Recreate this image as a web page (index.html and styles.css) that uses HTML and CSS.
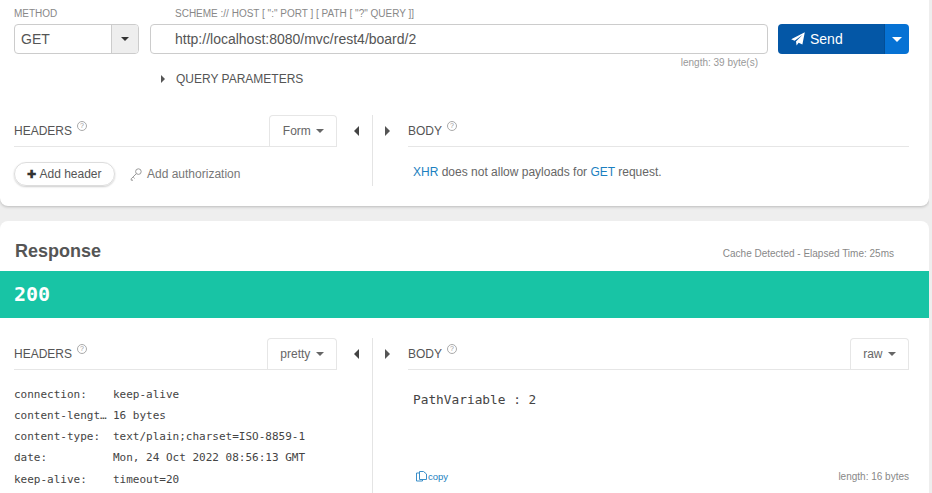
FILE: index.html
```html
<!DOCTYPE html>
<html lang="en">
<head>
<meta charset="utf-8">
<title>REST client</title>
<link rel="stylesheet" href="styles.css">
</head>
<body>
<main class="page">
  <section class="card request">
    <div class="request-row">
      <div class="method-col">
        <div class="field-label">METHOD</div>
        <div class="method-box">
          <span class="method-value">GET</span>
          <span class="method-caret"><i class="caret-down dark"></i></span>
        </div>
      </div>
      <div class="url-col">
        <div class="field-label url-label">SCHEME :// HOST [ ":" PORT ] [ PATH [ "?" QUERY ]]</div>
        <div class="url-box">http://localhost:8080/mvc/rest4/board/2</div>
        <div class="url-length">length: 39 byte(s)</div>
      </div>
      <div class="send-col">
        <div class="send-btn">
          <span class="send-main">
            <svg class="send-icon" viewBox="0 0 14 14" width="14" height="14"><path d="M13.8.2 11.4 12.6 7.6 10.8 5.6 13.6 5 9.6 11.6 2.8 3.6 8.8.2 7.2Z" fill="#fff"/></svg>
            Send
          </span>
          <span class="send-drop"><i class="caret-down white"></i></span>
        </div>
      </div>
    </div>
    <div class="query-row"><i class="caret-right small"></i><span>QUERY PARAMETERS</span></div>
    <div class="split split-request">
      <div class="pane-left">
        <div class="pane-head">
          <span class="pane-title">HEADERS</span><span class="help">?</span>
          <span class="tab tab-form">Form <i class="caret-down grey"></i></span>
        </div>
        <div class="header-actions">
          <span class="pill"><b class="plus">✚</b>Add header</span>
          <span class="auth">
            <svg class="key" viewBox="0 0 12 13" width="12" height="13"><g fill="none" stroke="#999" stroke-width="1"><circle cx="8.4" cy="3.6" r="2.8"/><path d="M6.4 5.6 1.2 10.8 1.2 12.2 3 12.2M3.2 9 4.6 10.4"/></g></svg>
            Add authorization
          </span>
        </div>
      </div>
      <div class="arrows"><i class="caret-left"></i></div>
      <div class="pane-right">
        <span class="arrow-right"><i class="caret-right"></i></span>
        <div class="pane-main">
          <div class="pane-head">
            <span class="pane-title">BODY</span><span class="help">?</span>
          </div>
          <p class="xhr"><span class="link">XHR</span> does not allow payloads for <span class="link">GET</span> request.</p>
        </div>
      </div>
    </div>
  </section>

  <section class="card response">
    <div class="response-head">
      <h2>Response</h2>
      <span class="elapsed">Cache Detected - Elapsed Time: 25ms</span>
    </div>
    <div class="status">200</div>
    <div class="split split-response">
      <div class="pane-left">
        <div class="pane-head">
          <span class="pane-title">HEADERS</span><span class="help">?</span>
          <span class="tab tab-pretty">pretty <i class="caret-down grey"></i></span>
        </div>
        <dl class="resp-headers">
          <div class="kv"><dt>connection:</dt><dd>keep-alive</dd></div>
          <div class="kv"><dt>content-length:</dt><dd>16 bytes</dd></div>
          <div class="kv"><dt>content-type:</dt><dd>text/plain;charset=ISO-8859-1</dd></div>
          <div class="kv"><dt>date:</dt><dd>Mon, 24 Oct 2022 08:56:13 GMT</dd></div>
          <div class="kv"><dt>keep-alive:</dt><dd>timeout=20</dd></div>
        </dl>
      </div>
      <div class="arrows"><i class="caret-left"></i></div>
      <div class="pane-right">
        <span class="arrow-right"><i class="caret-right"></i></span>
        <div class="pane-main">
          <div class="pane-head">
            <span class="pane-title">BODY</span><span class="help">?</span>
            <span class="tab tab-raw">raw <i class="caret-down grey"></i></span>
          </div>
          <pre class="resp-body">PathVariable : 2</pre>
          <div class="resp-foot">
            <span class="copy">
              <svg viewBox="0 0 11 12" width="11" height="12"><g fill="#fff" stroke="#3b8fc9" stroke-width="1"><path d="M.5 3H6.5V11H.5Z"/><path d="M3.5 1.5H7.5L10.5 4V9.5H3.5Z"/></g></svg>
              copy
            </span>
            <span class="resp-length">length: 16 bytes</span>
          </div>
        </div>
      </div>
    </div>
  </section>
</main>
</body>
</html>
```

FILE: styles.css
```css
* { box-sizing: border-box; }
html, body { height: 100%; }
body {
  margin: 0;
  background: #eeeeee;
  font-family: "Liberation Sans", Arial, sans-serif;
  color: #555;
  overflow: hidden;
}
i { display: inline-block; }
.page { width: 929px; height: 493px; overflow: hidden; }
.card { background: #fff; }
.request {
  height: 206px;
  border-radius: 0 0 8px 8px;
  box-shadow: 0 1px 3px rgba(0, 0, 0, .22);
  padding: 8px 20px 0 14px;
  margin-bottom: 15px;
}
.request-row { display: flex; }
.method-col { width: 125px; margin-right: 11px; }
.url-col { width: 618px; margin-right: 10px; }
.send-col { width: 131px; padding-top: 16px; }
.field-label { font-size: 10px; line-height: 12px; height: 16px; color: #888; }
.url-label { padding-left: 25px; }
.method-box {
  display: flex;
  height: 30px;
  border: 1px solid #ccc;
  border-radius: 4px;
  overflow: hidden;
}
.method-value { flex: 1; font-size: 14px; line-height: 28px; padding-left: 6px; }
.method-caret {
  width: 27px;
  background: #eee;
  border-left: 1px solid #ccc;
  display: flex;
  align-items: center;
  justify-content: center;
}
.url-box {
  height: 30px;
  border: 1px solid #ccc;
  border-radius: 4px;
  font-size: 14px;
  line-height: 28px;
  padding-left: 24px;
  color: #555;
}
.url-length { font-size: 10px; line-height: 12px; margin-top: 3px; padding-right: 10px; text-align: right; color: #999; }
.send-btn { display: flex; height: 30px; border-radius: 4px; overflow: hidden; color: #fff; font-size: 14px; }
.send-main {
  width: 106px;
  background: #0457a6;
  display: flex;
  align-items: center;
  gap: 5px;
  padding-left: 13px;
}
.send-drop {
  flex: 1;
  background: #0672d4;
  border-left: 1px solid #034e96;
  display: flex;
  align-items: center;
  justify-content: center;
}
.caret-down { width: 0; height: 0; border: 4px solid transparent; border-bottom: 0; }
.caret-down.dark { border-top-color: #333; }
.caret-down.white { border-top-color: #fff; border-width: 5px 5px 0; }
.caret-down.grey { border-top-color: #666; margin-left: 2px; vertical-align: 2px; }
.caret-right { width: 0; height: 0; border: 5px solid transparent; border-left-color: #555; border-right: 0; }
.caret-left { width: 0; height: 0; border: 5px solid transparent; border-right-color: #444; border-left: 0; }
.caret-right.small { border-width: 4px; border-right: 0; }
.query-row {
  display: flex;
  align-items: center;
  height: 14px;
  margin-top: 3px;
  padding-left: 147px;
  font-size: 12px;
  gap: 11px;
  color: #555;
}
.split { display: flex; }
.split-request { margin-top: 29px; height: 71px; }
.split-response { margin: 20px 20px 0 14px; height: 155px; }
.pane-left { width: 323px; }
.arrows { width: 35px; height: 31px; display: flex; align-items: center; justify-content: flex-start; padding-left: 17px; }
.pane-right { flex: 1; border-left: 1px solid #e4e4e4; display: flex; }
.arrow-right { width: 35px; height: 31px; display: flex; align-items: center; padding-left: 12px; flex: none; }
.pane-main { flex: 1; }
.pane-head {
  display: flex;
  align-items: center;
  height: 32px;
  border-bottom: 1px solid #e6e6e6;
  position: relative;
  padding-top: 1px;
}
.pane-title { font-size: 12px; color: #555; }
.help {
  width: 10px;
  height: 10px;
  border: 1px solid #aaa;
  border-radius: 50%;
  font-size: 7px;
  line-height: 8px;
  text-align: center;
  color: #999;
  margin: -10px 0 0 5px;
}
.tab {
  margin-left: auto;
  height: 32px;
  border: 1px solid #e6e6e6;
  border-bottom: 0;
  border-radius: 4px 4px 0 0;
  font-size: 12px;
  line-height: 30px;
  text-align: center;
  color: #666;
  margin-top: -1px;
}
.tab-form { width: 68px; padding-left: 1px; }
.tab-pretty { width: 70px; }
.tab-raw { width: 59px; }
.header-actions { display: flex; align-items: center; gap: 15px; margin-top: 15px; font-size: 12px; }
.pill {
  width: 101px;
  height: 24px;
  border: 1px solid #ddd;
  border-radius: 12px;
  box-shadow: 0 1px 2px rgba(0, 0, 0, .2);
  line-height: 22px;
  text-align: center;
  color: #555;
}
.plus { font-size: 11px; color: #333; margin-right: 3px; }
.auth { display: flex; align-items: center; gap: 5px; color: #777; }
.key { flex: none; }
.xhr { margin: 18px 0 0 5px; font-size: 12px; line-height: 14px; color: #666; }
.link { color: #1c7fc0; }
.response { height: 272px; border-radius: 8px 8px 0 0; }
.response-head { display: flex; align-items: center; justify-content: space-between; height: 50px; padding: 10px 35px 0 15px; }
.response-head h2 { margin: 0; font-size: 18px; line-height: 22px; color: #555; }
.elapsed { font-size: 10px; color: #888; padding-top: 4px; }
.status {
  height: 47px;
  background: #18c4a5;
  color: #fff;
  font-family: "DejaVu Sans Mono", monospace;
  font-weight: 700;
  font-size: 20px;
  line-height: 47px;
  padding-left: 14px;
}
.resp-headers {
  margin: 13.7px 0 0;
  font-family: "DejaVu Sans Mono", monospace;
  font-size: 11px;
  line-height: 21.2px;
  color: #444;
}
.kv { display: flex; }
.kv dt { width: 93px; margin-right: 6px; overflow: hidden; white-space: nowrap; text-overflow: ellipsis; }
.kv dd { margin: 0; white-space: nowrap; }
.resp-body {
  margin: 22px 0 0 5px;
  height: 78px;
  font-family: "DejaVu Sans Mono", monospace;
  font-size: 12.8px;
  line-height: 16px;
  color: #444;
}
.resp-foot { display: flex; justify-content: space-between; align-items: center; padding-left: 8px; }
.copy { display: flex; align-items: center; gap: 1px; font-size: 9.5px; color: #1c7fc0; }
.resp-length { font-size: 10px; color: #888; }
```
